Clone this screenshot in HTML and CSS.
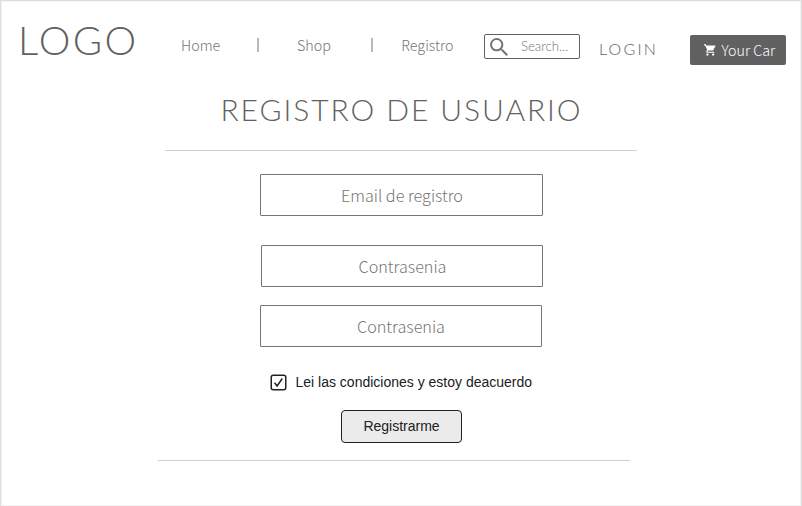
FILE: index.html
```html
<!DOCTYPE html>
<html lang="es">
<head>
<meta charset="utf-8">
<title>Registro de usuario</title>
<link rel="stylesheet" href="styles.css">
</head>
<body>
<div class="page">
  <header class="header">
    <a class="logo">LOGO</a>
    <nav class="nav">
      <a class="nav-link home">Home</a>
      <span class="divider"></span>
      <a class="nav-link shop">Shop</a>
      <span class="divider"></span>
      <a class="nav-link registro">Registro</a>
    </nav>
    <div class="search">
      <svg class="search-icon" viewBox="3 3 17.5 17.5"><path d="M15.5 14h-.79l-.28-.27A6.471 6.471 0 0 0 16 9.5 6.5 6.5 0 1 0 9.5 16c1.61 0 3.09-.59 4.23-1.57l.27.28v.79l5 4.99L20.49 19l-4.99-5zm-6 0C7.01 14 5 11.99 5 9.5S7.01 5 9.5 5 14 7.01 14 9.5 11.99 14 9.5 14z"/></svg>
      <span class="search-text">Search...</span>
    </div>
    <a class="login">LOGIN</a>
    <a class="cart">
      <svg class="cart-icon" viewBox="1 2 21 20"><path d="M7 18c-1.1 0-1.99.9-1.99 2S5.900 22 7 22s2-.9 2-2-.9-2-2-2zM1 2v2h2l3.600 7.590-1.350 2.450c-.16.28-.25.61-.25.96 0 1.100.9 2 2 2h12v-2H7.420c-.14 0-.25-.11-.25-.25l.03-.12.9-1.630h7.450c.75 0 1.410-.41 1.750-1.030l3.580-6.490A1 1 0 0 0 20 4H5.210l-.94-2H1zm16 16c-1.100 0-1.990.9-1.990 2s.89 2 1.990 2 2-.9 2-2-.9-2-2-2z"/></svg>
      <span class="cart-text">Your Car</span>
    </a>
  </header>
  <main class="main">
    <h1 class="title">REGISTRO DE USUARIO</h1>
    <hr class="rule rule-top">
    <form class="form">
      <div class="field email">Email de registro</div>
      <div class="field password">Contrasenia</div>
      <div class="field confirm">Contrasenia</div>
      <label class="terms">
        <svg class="checkbox" viewBox="0 0 17 17"><rect x="1.250" y="1.250" width="14.500" height="14.500" rx="2"/><path d="M4.500 8.800l2.600 3.200 5.200-7.500"/></svg>
        <span>Lei las condiciones y estoy deacuerdo</span>
      </label>
      <button class="submit" type="button">Registrarme</button>
    </form>
    <hr class="rule rule-bottom">
  </main>
</div>
</body>
</html>
```
FILE: styles.css
```css
* { box-sizing: border-box; }

body { margin: 0; background: #fff; }

.page {
  width: 802px;
  height: 506px;
  overflow: hidden;
  border: 1px solid #dedede;
  border-bottom: 0;
  box-shadow: inset 0 0 0 1px #f3f3f3;
  color: #616161;
  white-space: nowrap;
}

.header {
  display: flex;
  align-items: flex-start;
  height: 79px;
  padding-left: 17px;
}

.logo {
  width: 163px;
  margin-top: 15px;
  font: 300 40px/48px Lato, sans-serif;
  letter-spacing: 2.3px;
}

.nav {
  display: flex;
  align-items: center;
  width: 303px;
  margin-top: 33px;
}

.nav-link {
  font: 300 14.300px/22px "Noto Sans CJK JP", sans-serif;
  color: #757575;
}

.home { width: 76px; }
.shop { width: 74px; margin-left: 38px; }
.registro { margin-left: 28.300px; }

.divider {
  width: 2px;
  height: 14px;
  background: #b9b9b9;
}

.search {
  display: flex;
  align-items: center;
  width: 96px;
  height: 25px;
  margin-top: 33px;
  padding-left: 5px;
  border: 1px solid #616161;
  border-radius: 2px;
}

.search-icon { width: 18px; height: 18px; fill: #757575; }

.search-text {
  margin-left: 13px;
  padding-bottom: 1px;
  font: 300 13.200px/20px Lato, sans-serif;
  color: #757575;
}

.login {
  width: 91px;
  margin: 38px 0 0 19px;
  font: 300 16px/20px Lato, sans-serif;
  letter-spacing: 2.200px;
}

.cart {
  display: flex;
  align-items: center;
  width: 96px;
  height: 30px;
  margin-top: 34px;
  padding-left: 13.500px;
  border-radius: 2px;
  background: #616161;
  color: #fff;
}

.cart-icon { width: 12px; height: 12px; fill: #fff; }

.cart-text {
  margin-left: 6px;
  font: 300 14.300px/22px "Noto Sans CJK JP", sans-serif;
}

.title {
  margin: 11px 0 0;
  padding-left: 1px;
  text-align: center;
  font: 300 30px/36px Lato, sans-serif;
  letter-spacing: 1.930px;
}

.rule {
  width: 472px;
  height: 1px;
  border: 0;
  background: #cfcfcf;
}

.rule-top { margin: 23px 0 0 164px; }
.rule-bottom { margin: 17px 0 0 157px; }

.form {
  display: flex;
  flex-direction: column;
  align-items: flex-start;
  padding: 23px 0 0 259px;
}

.field {
  width: 283px;
  height: 42px;
  border: 1px solid #757575;
  border-radius: 1px;
  text-align: center;
  font: 300 16.200px/40px "Noto Sans CJK JP", sans-serif;
  color: #757575;
}

.email { padding-left: 1px; }
.password { width: 282px; margin: 29px 0 0 1px; padding-left: 1px; }
.confirm { width: 282px; margin-top: 18px; }

.terms {
  display: flex;
  align-items: center;
  margin: 27px 0 0 10px;
  font: 14px/17px "Liberation Sans", Arial, sans-serif;
  color: #212121;
}

.checkbox {
  width: 17px;
  height: 17px;
  margin-right: 8.500px;
  fill: none;
  stroke: #212121;
  stroke-width: 1.5;
}

.submit {
  width: 121px;
  height: 33px;
  margin: 19px 0 0 81px;
  padding: 0 0 2px;
  border: 1px solid #212121;
  border-radius: 4px;
  background: #ebebeb;
  font: 14px/30px "Liberation Sans", Arial, sans-serif;
  color: #212121;
}
```
